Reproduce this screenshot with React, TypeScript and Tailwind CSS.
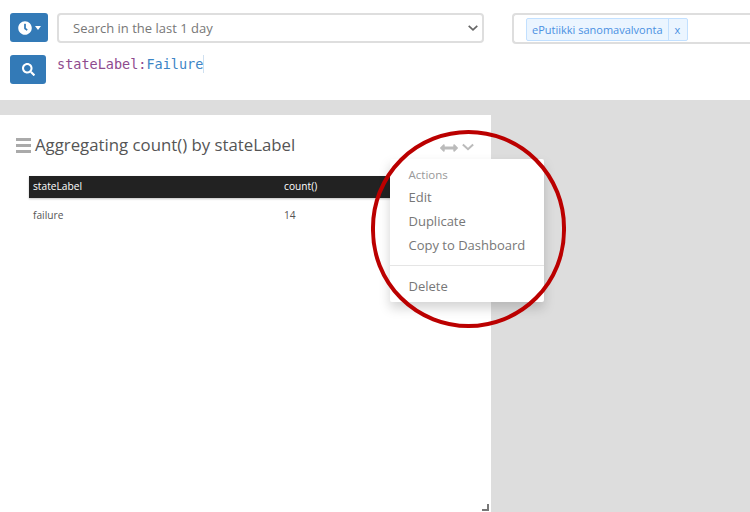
import { FaClock, FaSearch, FaArrowsAltH } from 'react-icons/fa';

function Chevron({ className = '' }: { className?: string }) {
    return (
        <svg viewBox="0 0 14 8" className={className} fill="none" stroke="currentColor" strokeWidth="2.4">
            <path d="M1 1l6 5.5L13 1" />
        </svg>
    );
}

function SearchBar() {
    return (
        <div className="h-[100px] bg-white shrink-0 pl-[10px] pt-[13px]">
            <div className="flex items-start">
                <button className="w-[38px] h-[29px] shrink-0 bg-[#337ab7] rounded-[3px] flex items-center justify-center gap-[3px] text-white">
                    <FaClock className="text-[14px]" />
                    <span className="w-0 h-0 border-x-[3px] border-x-transparent border-t-[4px] border-t-white" />
                </button>
                <div className="ml-[9px] w-[427px] h-[30px] shrink-0 border-2 border-[#dedede] rounded-[4px] flex items-center justify-between pl-[14px] pr-[3px] text-[13px] text-[#777777]">
                    <span className="pt-[2px]">Search in the last 1 day</span>
                    <Chevron className="w-[10px] h-[6px] text-[#666666] mr-[1px]" />
                </div>
                <div className="ml-[28px] w-[238px] h-[31px] shrink-0 border-2 border-r-0 border-[#dedede] rounded-l-[4px] pl-[12px] pt-[3px] flex items-start">
                    <div className="flex h-[23px] border border-[#c2e0ff] bg-[#ebf5ff] rounded-[2px] text-[#4a90e2] text-[11px] leading-[21px]">
                        <span className="px-[5px] border-r border-[#c2e0ff]">ePutiikki sanomavalvonta</span>
                        <span className="w-[18px] text-center">x</span>
                    </div>
                </div>
            </div>
            <div className="flex items-start mt-[11px]">
                <button className="w-[36px] h-[29px] shrink-0 bg-[#337ab7] rounded-[3px] flex items-center justify-center text-white">
                    <FaSearch className="text-[13px]" />
                </button>
                <div className="ml-[11px] flex h-[18px] items-center border-r border-[#cfe0f0] font-['DejaVu_Sans_Mono',monospace] text-[13.5px] leading-[18px]">
                    <span className="text-[#8e4b8e]">stateLabel:</span>
                    <span className="text-[#3d85c6]">Failure</span>
                </div>
            </div>
        </div>
    );
}

function ResultTable() {
    return (
        <div className="ml-[29px] mr-[11px] mt-[19px] text-[10.2px]">
            <div className="flex h-[22px] items-center bg-[#222222] text-white pl-[4px] shadow-[0_1px_2px_rgba(0,0,0,0.25)]">
                <span className="w-[251px]">stateLabel</span>
                <span>count()</span>
            </div>
            <div className="flex h-[36px] items-center text-[#555555] pl-[4px]">
                <span className="w-[251px]">failure</span>
                <span>14</span>
            </div>
        </div>
    );
}

function ActionsMenu() {
    return (
        <div className="absolute left-[390px] top-[44px] w-[154px] h-[143px] bg-white rounded-[2px] shadow-[0_6px_12px_rgba(0,0,0,0.175)] pl-[18.5px] text-[13px] text-[#777777]">
            <div className="mt-[7px] h-[17px] leading-[17px] text-[11.5px] text-[#999999]">Actions</div>
            <div className="mt-[2px] h-[24px] leading-[24px]">Edit</div>
            <div className="h-[24px] leading-[24px]">Duplicate</div>
            <div className="h-[24px] leading-[24px]">Copy to Dashboard</div>
            <div className="-ml-[18.5px] mt-[8px] h-px bg-[#e5e5e5]" />
            <div className="mt-[8px] h-[24px] leading-[24px]">Delete</div>
        </div>
    );
}

function WidgetPanel() {
    return (
        <div className="relative w-[491px] mt-[15px] flex-1 bg-white">
            <div className="flex items-center pt-[18px] pl-[16px] h-[42px]">
                <div className="flex flex-col gap-[3px] w-[15px]">
                    <div className="h-[3px] bg-[#aaaaaa]" />
                    <div className="h-[3px] bg-[#aaaaaa]" />
                    <div className="h-[3px] bg-[#aaaaaa]" />
                </div>
                <h2 className="ml-[4px] text-[16.8px] leading-[24px] text-[#555555]">Aggregating count() by stateLabel</h2>
                <div className="absolute left-[440px] top-[24px] flex items-center gap-[4px] text-[#bbbbbb]">
                    <FaArrowsAltH className="text-[18px]" />
                    <Chevron className="w-[12px] h-[8px] -mt-[3px]" />
                </div>
            </div>
            <ResultTable />
            <ActionsMenu />
            <svg viewBox="0 0 7 7" className="absolute right-[2px] bottom-[1px] w-[7px] h-[7px] text-[#777777]" fill="currentColor">
                <path d="M5 0h2v7H0V5h5z" />
            </svg>
        </div>
    );
}

export default function App() {
    return (
        <div className="relative w-[750px] h-[512px] overflow-hidden flex flex-col bg-[#dddddd] font-['Open_Sans',sans-serif]">
            <SearchBar />
            <WidgetPanel />
            {/* red annotation drawn over the screenshot */}
            <div className="absolute left-[371px] top-[130px] w-[195px] h-[198px] rounded-full border-[4px] border-[#bb0000]" />
        </div>
    );
}
